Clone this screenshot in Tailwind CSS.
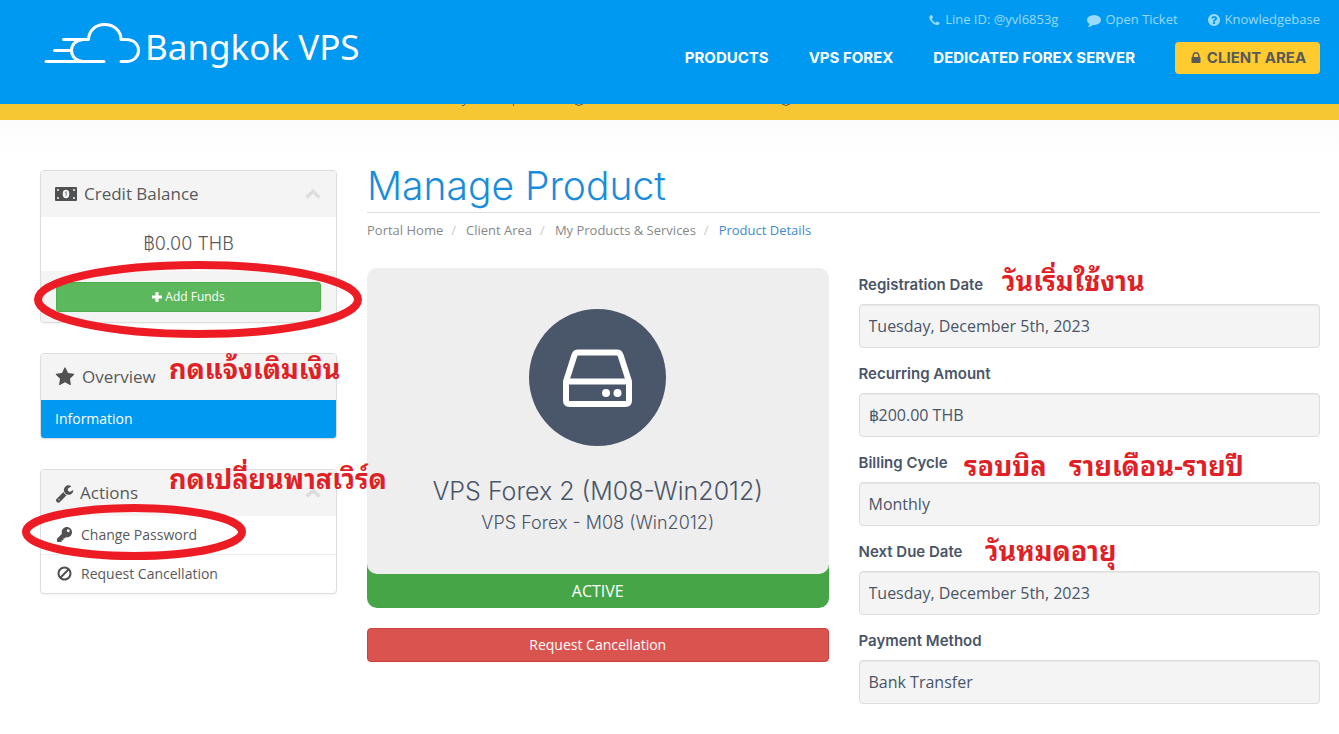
<!DOCTYPE html>
<html lang="en">
<head>
<meta charset="utf-8">
<meta name="viewport" content="width=device-width, initial-scale=1">
<title>Manage Product - Bangkok VPS</title>
<script src="https://cdn.jsdelivr.net/npm/@tailwindcss/browser@4"></script>
</head>
<body class="relative min-h-screen overflow-x-hidden bg-white font-['Open_Sans','Noto_Sans',sans-serif] text-[#58595b]">

<header class="flex h-[104px] justify-between bg-[#0099f1] pl-[44px] pr-[19px]">
  <a href="#" class="flex items-start pt-[20px] text-white" aria-label="Bangkok VPS">
    <svg class="mt-[2px] h-[42px] w-[98px]" viewBox="0 0 98 42" fill="none" stroke="currentColor" stroke-width="3" stroke-linecap="round" stroke-linejoin="round">
      <path d="M2 39.500H60M10.500 28.500H27.500M19.500 17.500H44.500C45 8.500 51.500 2.500 60.500 2.500S77 8.500 77 17.500H82C90 17.500 94.500 22.500 94.500 28.500S90 39.500 82 39.500H77"/>
      <path d="M39 17.500C32 18 27.500 22.500 27.500 28.500S32 39 39 39.500"/>
    </svg>
    <span class="ml-[3px] text-[35px] leading-[54px] font-['Noto_Sans',sans-serif]">Bangkok VPS</span>
  </a>
  <div class="flex flex-col items-end">
    <nav aria-label="Support" class="mt-[10px] flex h-[20px] items-center gap-[29px] text-[13px] text-[#99daff]">
      <a href="#" class="flex items-center gap-[4px]"><svg class="size-[13px]" viewBox="0 0 1792 1792" fill="currentColor"><path d="M1600 1240q0 27-10 70.500t-21 68.500q-21 50-122 106-94 51-186 51-27 0-52.500-3.500t-57.500-12.500-47.500-14.500-55.500-20.500-49-18q-98-35-175-83-128-79-264.500-215.500t-215.500-264.500q-48-77-83-175-3-9-18-49t-20.500-55.500-14.500-47.500-12.500-57.500-3.500-52.500q0-92 51-186 56-101 106-122 25-11 68.500-21t70.500-10q14 0 21 3 18 6 53 76 11 19 30 54t35 63.500 31 53.500q3 4 17.500 25t21.500 35.500 7 28.500q0 20-28.500 50t-62 55-62 53-28.500 46q0 9 5 22.500t8.500 20.500 14 24 11.500 19q76 137 174 235t235 174q2 1 19 11.500t24 14 20.500 8.500 22.500 5q18 0 46-28.500t53-62 55-62 50-28.500q14 0 28.500 7t35.500 21.500 25 17.500q25 15 53.500 31t63.500 35 54 30q70 35 76 53 3 7 3 21z"/></svg>Line ID: @yvl6853g</a>
      <a href="#" class="flex items-center gap-[4px]"><svg class="size-[14px]" viewBox="0 0 1792 1792" fill="currentColor"><path d="M1792 896q0 174-120 321.500t-326 233-450 85.500q-70 0-145-8-198 175-460 242-49 14-114 22-17 2-30.500-9t-17.500-29v-1q-3-4-.5-12t2-10 4.500-9.500l6-9 7-8.500 8-9q7-8 31-34.500t34.500-38 31-39.500 32.500-51 27-59 26-76q-157-89-247.500-220t-90.500-281q0-130 71-248.500t191-204.500 286-136.500 348-50.500q244 0 450 85.500t326 233 120 321.500z"/></svg>Open Ticket</a>
      <a href="#" class="flex items-center gap-[4px]"><svg class="size-[14px]" viewBox="0 0 1792 1792" fill="currentColor"><path d="M1024 1376v-192q0-14-9-23t-23-9h-192q-14 0-23 9t-9 23v192q0 14 9 23t23 9h192q14 0 23-9t9-23zm256-672q0-88-55.500-163t-138.500-116-170-41q-243 0-371 213-15 24 8 42l132 100q7 6 19 6 16 0 25-12 53-68 86-92 34-24 86-24 48 0 85.500 26t37.500 59q0 38-20 61t-68 45q-63 28-115.500 86.500t-52.500 125.500v36q0 14 9 23t23 9h192q14 0 23-9t9-23q0-19 21.500-49.500t54.500-49.500q32-18 49-28.500t46-35 44.500-48 28-60.500 12.500-81zm384 192q0 209-103 385.500t-279.500 279.500-385.500 103-385.500-103-279.500-279.500-103-385.500 103-385.500 279.500-279.500 385.500-103 385.500 103 279.500 279.500 103 385.500z"/></svg>Knowledgebase</a>
    </nav>
    <nav aria-label="Main" class="mt-[12px] flex h-[32px] items-center gap-[40px] font-['Inter',sans-serif] text-[15px] font-bold text-white">
      <a href="#">PRODUCTS</a>
      <a href="#">VPS FOREX</a>
      <a href="#">DEDICATED FOREX SERVER</a>
      <a href="#" class="flex h-[32px] w-[145px] items-center justify-center gap-[4px] rounded-[4px] bg-[#ffcb2f] text-[#58595b]"><svg class="size-[14px]" viewBox="0 0 1792 1792" fill="currentColor"><path d="M640 768h512v-192q0-106-75-181t-181-75-181 75-75 181v192zm832 96v576q0 40-28 68t-68 28h-960q-40 0-68-28t-28-68v-576q0-40 28-68t68-28h32v-192q0-184 132-316t316-132 316 132 132 316v192h32q40 0 68 28t28 68z"/></svg>CLIENT AREA</a>
    </nav>
  </div>
</header>
<div class="h-[16px] bg-[#f6c733]">
  <svg class="ml-[460px] block h-[4px] w-[400px]" viewBox="0 0 400 4" fill="none" stroke="#58595b" stroke-width="1"><path d="M2 1.500H4L5 0M53.500 0V2M115 0Q119 3 123 0M322 0Q326 3 330 0"/></svg>
</div>

<div class="flex gap-[30px] bg-linear-to-b from-[#fcfcfc] to-white to-[40px] pl-[40px] pr-[19px] pt-[50px] pb-[28px]">
  <aside class="flex w-[297px] shrink-0 flex-col gap-[30px]">
    <section class="overflow-hidden rounded-[4px] border border-[#ddd] bg-white shadow-xs">
      <h2 class="flex h-[46px] items-center bg-[#f4f4f4] pl-[14px] pr-[15px] text-[17px]">
        <svg class="mr-[7px] h-[14px] w-[22px]" viewBox="0 0 22 14"><rect width="22" height="14" rx="1" fill="#505153"/><g fill="#f4f4f4"><ellipse cx="11" cy="7" rx="3.300" ry="4.200"/><circle cx="3" cy="3" r="1"/><circle cx="19" cy="3" r="1"/><circle cx="3" cy="11" r="1"/><circle cx="19" cy="11" r="1"/></g><path d="M10.200 5.500l1-.8v4" stroke="#505153" stroke-width=".7" fill="none"/></svg>
        <span class="grow">Credit Balance</span>
        <svg class="h-[10px] w-[16px]" viewBox="0 0 16 10" fill="none" stroke="#ddd" stroke-width="3.500"><path d="M1.500 8.500L8 2.500l6.500 6"/></svg>
      </h2>
      <p class="flex h-[54px] items-center justify-center pb-[2px] font-['Inter','Noto_Sans',sans-serif] text-[18px] font-light">฿0.00 THB</p>
      <div class="bg-[#f4f4f4] px-[15px] pt-[11px] pb-[10px]">
        <button type="button" class="flex h-[30px] w-full items-center justify-center gap-[3px] rounded-[3px] border border-[#4cae4c] bg-[#5cb85c] text-[12px] text-white"><svg class="size-[10px]" viewBox="0 0 10 10" stroke="currentColor" stroke-width="3"><path d="M5 0v10M0 5h10"/></svg>Add Funds</button>
      </div>
    </section>

    <section class="overflow-hidden rounded-[4px] border border-[#ddd] bg-white shadow-xs">
      <h2 class="flex h-[46px] items-center bg-[#f4f4f4] pl-[14px] pr-[15px] text-[17px]">
        <svg class="mr-[7px] size-[20px]" viewBox="0 0 1792 1792" fill="#505153"><path d="M1728 647q0 22-26 48l-363 354 86 500q1 7 1 20 0 21-10.500 35.500t-30.500 14.500q-19 0-40-12l-449-236-449 236q-22 12-40 12-21 0-31.500-14.500t-10.500-35.500q0-6 2-20l86-500-364-354q-25-27-25-48 0-37 56-46l502-73 225-455q19-41 49-41t49 41l225 455 502 73q56 9 56 46z"/></svg>
        <span class="grow">Overview</span>
        <svg class="h-[10px] w-[16px]" viewBox="0 0 16 10" fill="none" stroke="#ddd" stroke-width="3.500"><path d="M1.500 8.500L8 2.500l6.500 6"/></svg>
      </h2>
      <a href="#" class="flex h-[38px] items-center bg-[#0099f1] px-[14px] pb-[2px] text-[14px] text-white">Information</a>
    </section>

    <section class="overflow-hidden rounded-[4px] border border-[#ddd] bg-white shadow-xs">
      <h2 class="flex h-[46px] items-center bg-[#f4f4f4] pl-[14px] pr-[15px] text-[17px]">
        <svg class="mr-[6px] size-[19px]" viewBox="0 0 1792 1792" fill="#505153"><path d="M448 1472q0-26-19-45t-45-19-45 19-19 45 19 45 45 19 45-19 19-45zm644-420l-682 682q-37 37-90 37-52 0-91-37l-106-108q-38-36-38-90 0-53 38-91l681-681q39 98 114.500 173.500t173.500 114.500zm634-435q0 39-23 106-47 134-164.500 217.500t-258.500 83.500q-185 0-316.500-131.500t-131.500-316.500 131.500-316.500 316.500-131.500q58 0 121.500 16.500t107.500 46.500q16 11 16 28t-16 28l-293 169v224l193 107q5-3 79-48.500t135.500-81 70.500-35.500q15 0 23.500 10t8.500 25z"/></svg>
        <span class="grow">Actions</span>
        <svg class="h-[10px] w-[16px]" viewBox="0 0 16 10" fill="none" stroke="#ddd" stroke-width="3.500"><path d="M1.500 8.500L8 2.500l6.500 6"/></svg>
      </h2>
      <a href="#" class="flex h-[38px] items-center gap-[9px] px-[16px] pb-[2px] text-[14px]"><svg class="size-[15px]" viewBox="0 0 512 512" fill="#505153"><path d="M512 176C512 273.200 433.200 352 336 352c-11.220 0-22.190-1.062-32.827-3.069l-24.012 27.014A24 24 0 0 1 261.223 384H224v40c0 13.255-10.745 24-24 24h-40v40c0 13.255-10.745 24-24 24H24c-13.255 0-24-10.745-24-24v-78.059c0-6.365 2.529-12.470 7.029-16.971l161.802-161.802C163.108 213.814 160 195.271 160 176 160 78.798 238.797 0 336 0 433.488 0 512 78.511 512 176zM336 128c0 26.510 21.490 48 48 48s48-21.490 48-48-21.490-48-48-48-48 21.490-48 48z"/></svg>Change Password</a>
      <a href="#" class="flex h-[39px] items-center gap-[9px] border-t border-[#eee] px-[16px] pb-[2px] text-[14px]"><svg class="size-[15px]" viewBox="70 70 1652 1652" fill="#505153"><path d="M1440 893q0-161-87-295l-754 753q137 89 297 89 111 0 211.500-43.500t173.500-116.500 116-174.500 43-212.500zm-999 299l755-754q-135-91-300-91-148 0-273 73t-198 199-73 274q0 162 89 299zm1223-299q0 157-61 300t-163.500 246-245 164-298.500 61-298.500-61-245-164-163.500-246-61-300 61-299.500 163.500-245.500 245-164 298.500-61 298.500 61 245 164 163.500 245.500 61 299.500z"/></svg>Request Cancellation</a>
    </section>
  </aside>

  <main class="min-w-0 grow">
    <h1 class="h-[43px] border-b border-[#ddd] font-['Inter',sans-serif] text-[39px] leading-[32px] font-light text-[#1a8cdc]">Manage Product</h1>
    <nav aria-label="Breadcrumb" class="mt-[8px] flex h-[20px] items-center text-[13px] text-[#888]">
      <a href="#">Portal Home</a><span class="pl-[8px] pr-[10px] text-[#ccc]">/</span>
      <a href="#">Client Area</a><span class="pl-[8px] pr-[10px] text-[#ccc]">/</span>
      <a href="#">My Products &amp; Services</a><span class="pl-[8px] pr-[10px] text-[#ccc]">/</span>
      <a href="#" class="text-[#428bca]" aria-current="page">Product Details</a>
    </nav>
    <div class="mt-[27px] grid grid-cols-2 gap-[30px]">
      <div>
        <div class="overflow-hidden rounded-[10px] bg-linear-to-b from-[#eee] from-50% to-[#46a546] to-50%">
          <div class="flex h-[306px] flex-col items-center rounded-[10px] bg-[#eee] pt-[41px] text-[#4a5568]">
            <svg class="size-[137px] shrink-0" viewBox="0 0 137 137"><circle cx="68.500" cy="68.500" r="68.500" fill="#4a576a"/><g fill="none" stroke="#fff" stroke-width="6" stroke-linejoin="round"><path d="M37 72.500L45.500 46Q46.500 43.500 49 43.500H88Q90.500 43.500 91.500 46L100 72.500V91.500Q100 95 96.500 95H40.500Q37 95 37 91.500Z"/><path d="M37 72.500H100"/></g><circle cx="77" cy="84" r="4" fill="#fff"/><circle cx="88.500" cy="84" r="4" fill="#fff"/></svg>
            <h3 class="mt-[29px] font-['Inter',sans-serif] text-[25px] leading-[32px] font-light">VPS Forex 2 (M08-Win2012)</h3>
            <h4 class="mt-[4px] font-['Inter',sans-serif] text-[18px] leading-[24px] font-light">VPS Forex - M08 (Win2012)</h4>
          </div>
          <div class="flex h-[34px] items-center justify-center text-[16px] text-white">ACTIVE</div>
        </div>
        <button type="button" class="mt-[20px] h-[34px] w-full rounded-[4px] border border-[#c9403c] bg-[#d9534f] pb-[2px] text-[14px] text-white">Request Cancellation</button>
      </div>
      <form class="flex flex-col gap-[16px] pt-[7px] text-[#4a5568]">
        <div>
          <label for="reg" class="block h-[29px] font-['Inter',sans-serif] text-[15px] leading-[20px] font-semibold">Registration Date</label>
          <input id="reg" readonly value="Tuesday, December 5th, 2023" class="block h-[44px] w-full rounded-[4px] border border-[#ddd] bg-[#f4f4f4] px-[9px] text-[16px] inset-shadow-2xs">
        </div>
        <div>
          <label for="amt" class="block h-[29px] font-['Inter',sans-serif] text-[15px] leading-[20px] font-semibold">Recurring Amount</label>
          <input id="amt" readonly value="฿200.00 THB" class="block h-[44px] w-full rounded-[4px] border border-[#ddd] bg-[#f4f4f4] px-[9px] text-[16px] inset-shadow-2xs">
        </div>
        <div>
          <label for="cyc" class="block h-[29px] font-['Inter',sans-serif] text-[15px] leading-[20px] font-semibold">Billing Cycle</label>
          <input id="cyc" readonly value="Monthly" class="block h-[44px] w-full rounded-[4px] border border-[#ddd] bg-[#f4f4f4] px-[9px] text-[16px] inset-shadow-2xs">
        </div>
        <div>
          <label for="due" class="block h-[29px] font-['Inter',sans-serif] text-[15px] leading-[20px] font-semibold">Next Due Date</label>
          <input id="due" readonly value="Tuesday, December 5th, 2023" class="block h-[44px] w-full rounded-[4px] border border-[#ddd] bg-[#f4f4f4] px-[9px] text-[16px] inset-shadow-2xs">
        </div>
        <div>
          <label for="pay" class="block h-[29px] font-['Inter',sans-serif] text-[15px] leading-[20px] font-semibold">Payment Method</label>
          <input id="pay" readonly value="Bank Transfer" class="block h-[44px] w-full rounded-[4px] border border-[#ddd] bg-[#f4f4f4] px-[9px] text-[16px] inset-shadow-2xs">
        </div>
      </form>
    </div>
  </main>
</div>

<!-- Hand-drawn notes laid over the page -->
<div lang="th" class="pointer-events-none absolute inset-0 text-[27px] leading-[28px] font-bold whitespace-pre text-[#e01f26] font-['Noto_Sans_Thai_Looped','Waree','Loma','Noto_Sans_Thai',sans-serif]">
  <svg class="absolute top-[258px] left-[32px] h-[84px] w-[332px]" viewBox="0 0 332 84" fill="none" stroke="#ed1c24" stroke-width="8"><ellipse cx="166" cy="41.500" rx="160" ry="34.500"/></svg>
  <svg class="absolute top-[500px] left-[20px] h-[64px] w-[230px]" viewBox="0 0 230 64" fill="none" stroke="#ed1c24" stroke-width="8"><ellipse cx="114" cy="32" rx="108" ry="24"/></svg>
  <span class="absolute top-[353px] left-[169px]">กดแจ้งเติมเงิน</span>
  <span class="absolute top-[463px] left-[169px]">กดเปลี่ยนพาสเวิร์ด</span>
  <span class="absolute top-[265px] left-[1002px]">วันเริ่มใช้งาน</span>
  <span class="absolute top-[450px] left-[964px]">รอบบิล</span>
  <span class="absolute top-[450px] left-[1069px]">รายเดือน-รายปี</span>
  <span class="absolute top-[535px] left-[985px]">วันหมดอายุ</span>
</div>
</body>
</html>
